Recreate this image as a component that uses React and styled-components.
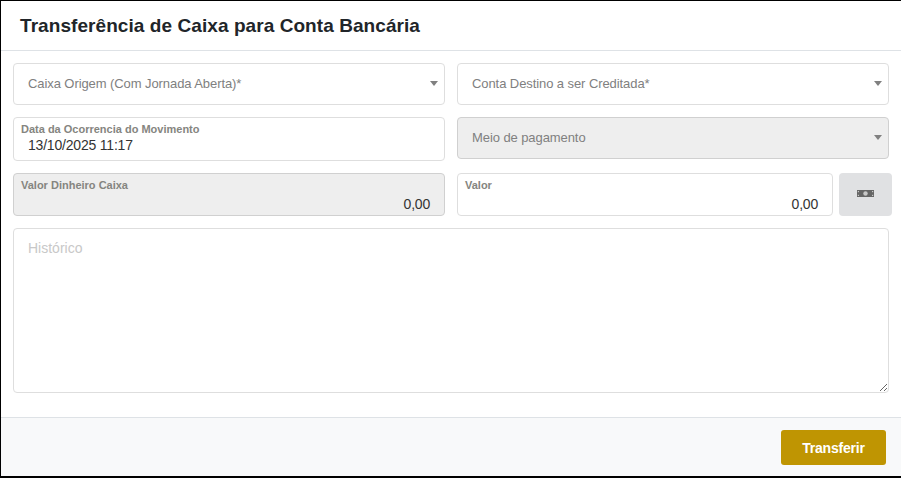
import React from 'react';
import styled, { createGlobalStyle } from 'styled-components';

const Global = createGlobalStyle`
  html, body { margin: 0; padding: 0; background: #000; }
  body { font-family: "Liberation Sans", Arial, sans-serif; }
`;
const Modal = styled.div`
  width: 900px; height: 475px; margin: 1px 0 0 1px; background: #fff;
  display: flex; flex-direction: column; overflow: hidden;
`;
const Header = styled.header`
  height: 49px; flex: none; border-bottom: 1px solid #dee2e6; padding-left: 19px;
  display: flex; align-items: center; box-sizing: content-box;
`;
const Title = styled.h1`
  margin: 0; font-size: 19px; font-weight: 700; color: #212529; letter-spacing: .07px;
`;
const Body = styled.div`
  flex: 1; display: flex; flex-direction: column; gap: 12px; padding: 12px 12px 0 12px;
`;
const Row = styled.div`display: flex; gap: 12px; align-items: flex-start;`;
const Col = styled.div`flex: none; width: 432px; display: flex; gap: 6px;`;
const Select = styled.div`
  box-sizing: border-box; width: 432px; height: 42px; flex: none;
  border: 1px solid ${p => p.$disabled ? '#d0d0d0' : '#dedede'}; border-radius: 4px;
  background: ${p => p.$disabled ? '#eee' : '#fff'};
  display: flex; align-items: center; justify-content: space-between;
  padding: 0 6px 2px 14px; font-size: 13px; letter-spacing: -.08px; color: #808080;
`;
const Caret = styled.span`
  width: 0; height: 0; border-left: 4px solid transparent; border-right: 4px solid transparent;
  border-top: 5px solid #808080;
`;
const Input = styled.div`
  box-sizing: border-box; flex: none; width: ${p => p.$w || 432}px; height: ${p => p.$h}px;
  border: 1px solid ${p => p.$disabled ? '#d0d0d0' : '#dedede'}; border-radius: 4px;
  background: ${p => p.$disabled ? '#eee' : '#fff'};
  padding: 5px 14px 0 7px; display: flex; flex-direction: column;
`;
const Label = styled.label`font-size: 11px; line-height: 13px; font-weight: 700; color: #858580;`;
const Value = styled.div`
  font-size: 14px; line-height: 16px; color: #333; letter-spacing: -.2px; margin-top: ${p => p.$right ? 4 : 1}px;
  padding-left: ${p => p.$right ? 0 : 7}px; text-align: ${p => p.$right ? 'right' : 'left'};
`;
const MoneyBtn = styled.button`
  flex: none; width: 53px; height: 43px; border: 0; border-radius: 4px; background: #e0e1e3;
  display: flex; align-items: center; justify-content: center; padding: 0 0 3px;
`;
const Textarea = styled.textarea`
  box-sizing: border-box; display: block; width: 876px; height: 165px; border: 1px solid #dedede;
  border-radius: 4px; padding: 11px 14px; font: 14px "Liberation Sans", Arial, sans-serif; outline: 0;
  &::placeholder { color: #c8c8c8; opacity: 1; }
`;
const Footer = styled.footer`
  box-sizing: border-box; flex: none; height: 59px; border-top: 1px solid #dee2e6; background: #f8f9fa;
  display: flex; justify-content: flex-end; align-items: flex-start; padding: 12px 15px 0 0;
`;
const Submit = styled.button`
  width: 105px; height: 35px; border: 0; border-radius: 3px; background: #bf9502; color: #fff;
  font: 700 14px "Liberation Sans", Arial, sans-serif; letter-spacing: -.2px;
`;

const BillIcon = () => (
  <svg width="17" height="7" viewBox="0 0 17 7" aria-hidden="true">
    <rect width="17" height="7" fill="#666" />
    <circle cx="8.5" cy="3.5" r="2.2" fill="#c8c8c8" />
    <rect x="0.8" y="1" width="1.2" height="1.2" fill="#c8c8c8" />
    <rect x="0.8" y="4.8" width="1.2" height="1.2" fill="#c8c8c8" />
    <rect x="15" y="1" width="1.2" height="1.2" fill="#c8c8c8" />
    <rect x="15" y="4.8" width="1.2" height="1.2" fill="#c8c8c8" />
  </svg>
);

export default function App() {
  return (
    <>
      <Global />
      <Modal>
        <Header><Title>Transferência de Caixa para Conta Bancária</Title></Header>
        <Body>
          <Row>
            <Select>Caixa Origem (Com Jornada Aberta)*<Caret /></Select>
            <Select>Conta Destino a ser Creditada*<Caret /></Select>
          </Row>
          <Row>
            <Input $h={44}><Label>Data da Ocorrencia do Movimento</Label><Value>13/10/2025 11:17</Value></Input>
            <Select $disabled>Meio de pagamento<Caret /></Select>
          </Row>
          <Row>
            <Input $h={43} $disabled><Label>Valor Dinheiro Caixa</Label><Value $right>0,00</Value></Input>
            <Col>
              <Input $h={43} $w={376}><Label>Valor</Label><Value $right>0,00</Value></Input>
              <MoneyBtn aria-label="Dinheiro"><BillIcon /></MoneyBtn>
            </Col>
          </Row>
          <Textarea placeholder="Histórico" />
        </Body>
        <Footer><Submit>Transferir</Submit></Footer>
      </Modal>
    </>
  );
}
